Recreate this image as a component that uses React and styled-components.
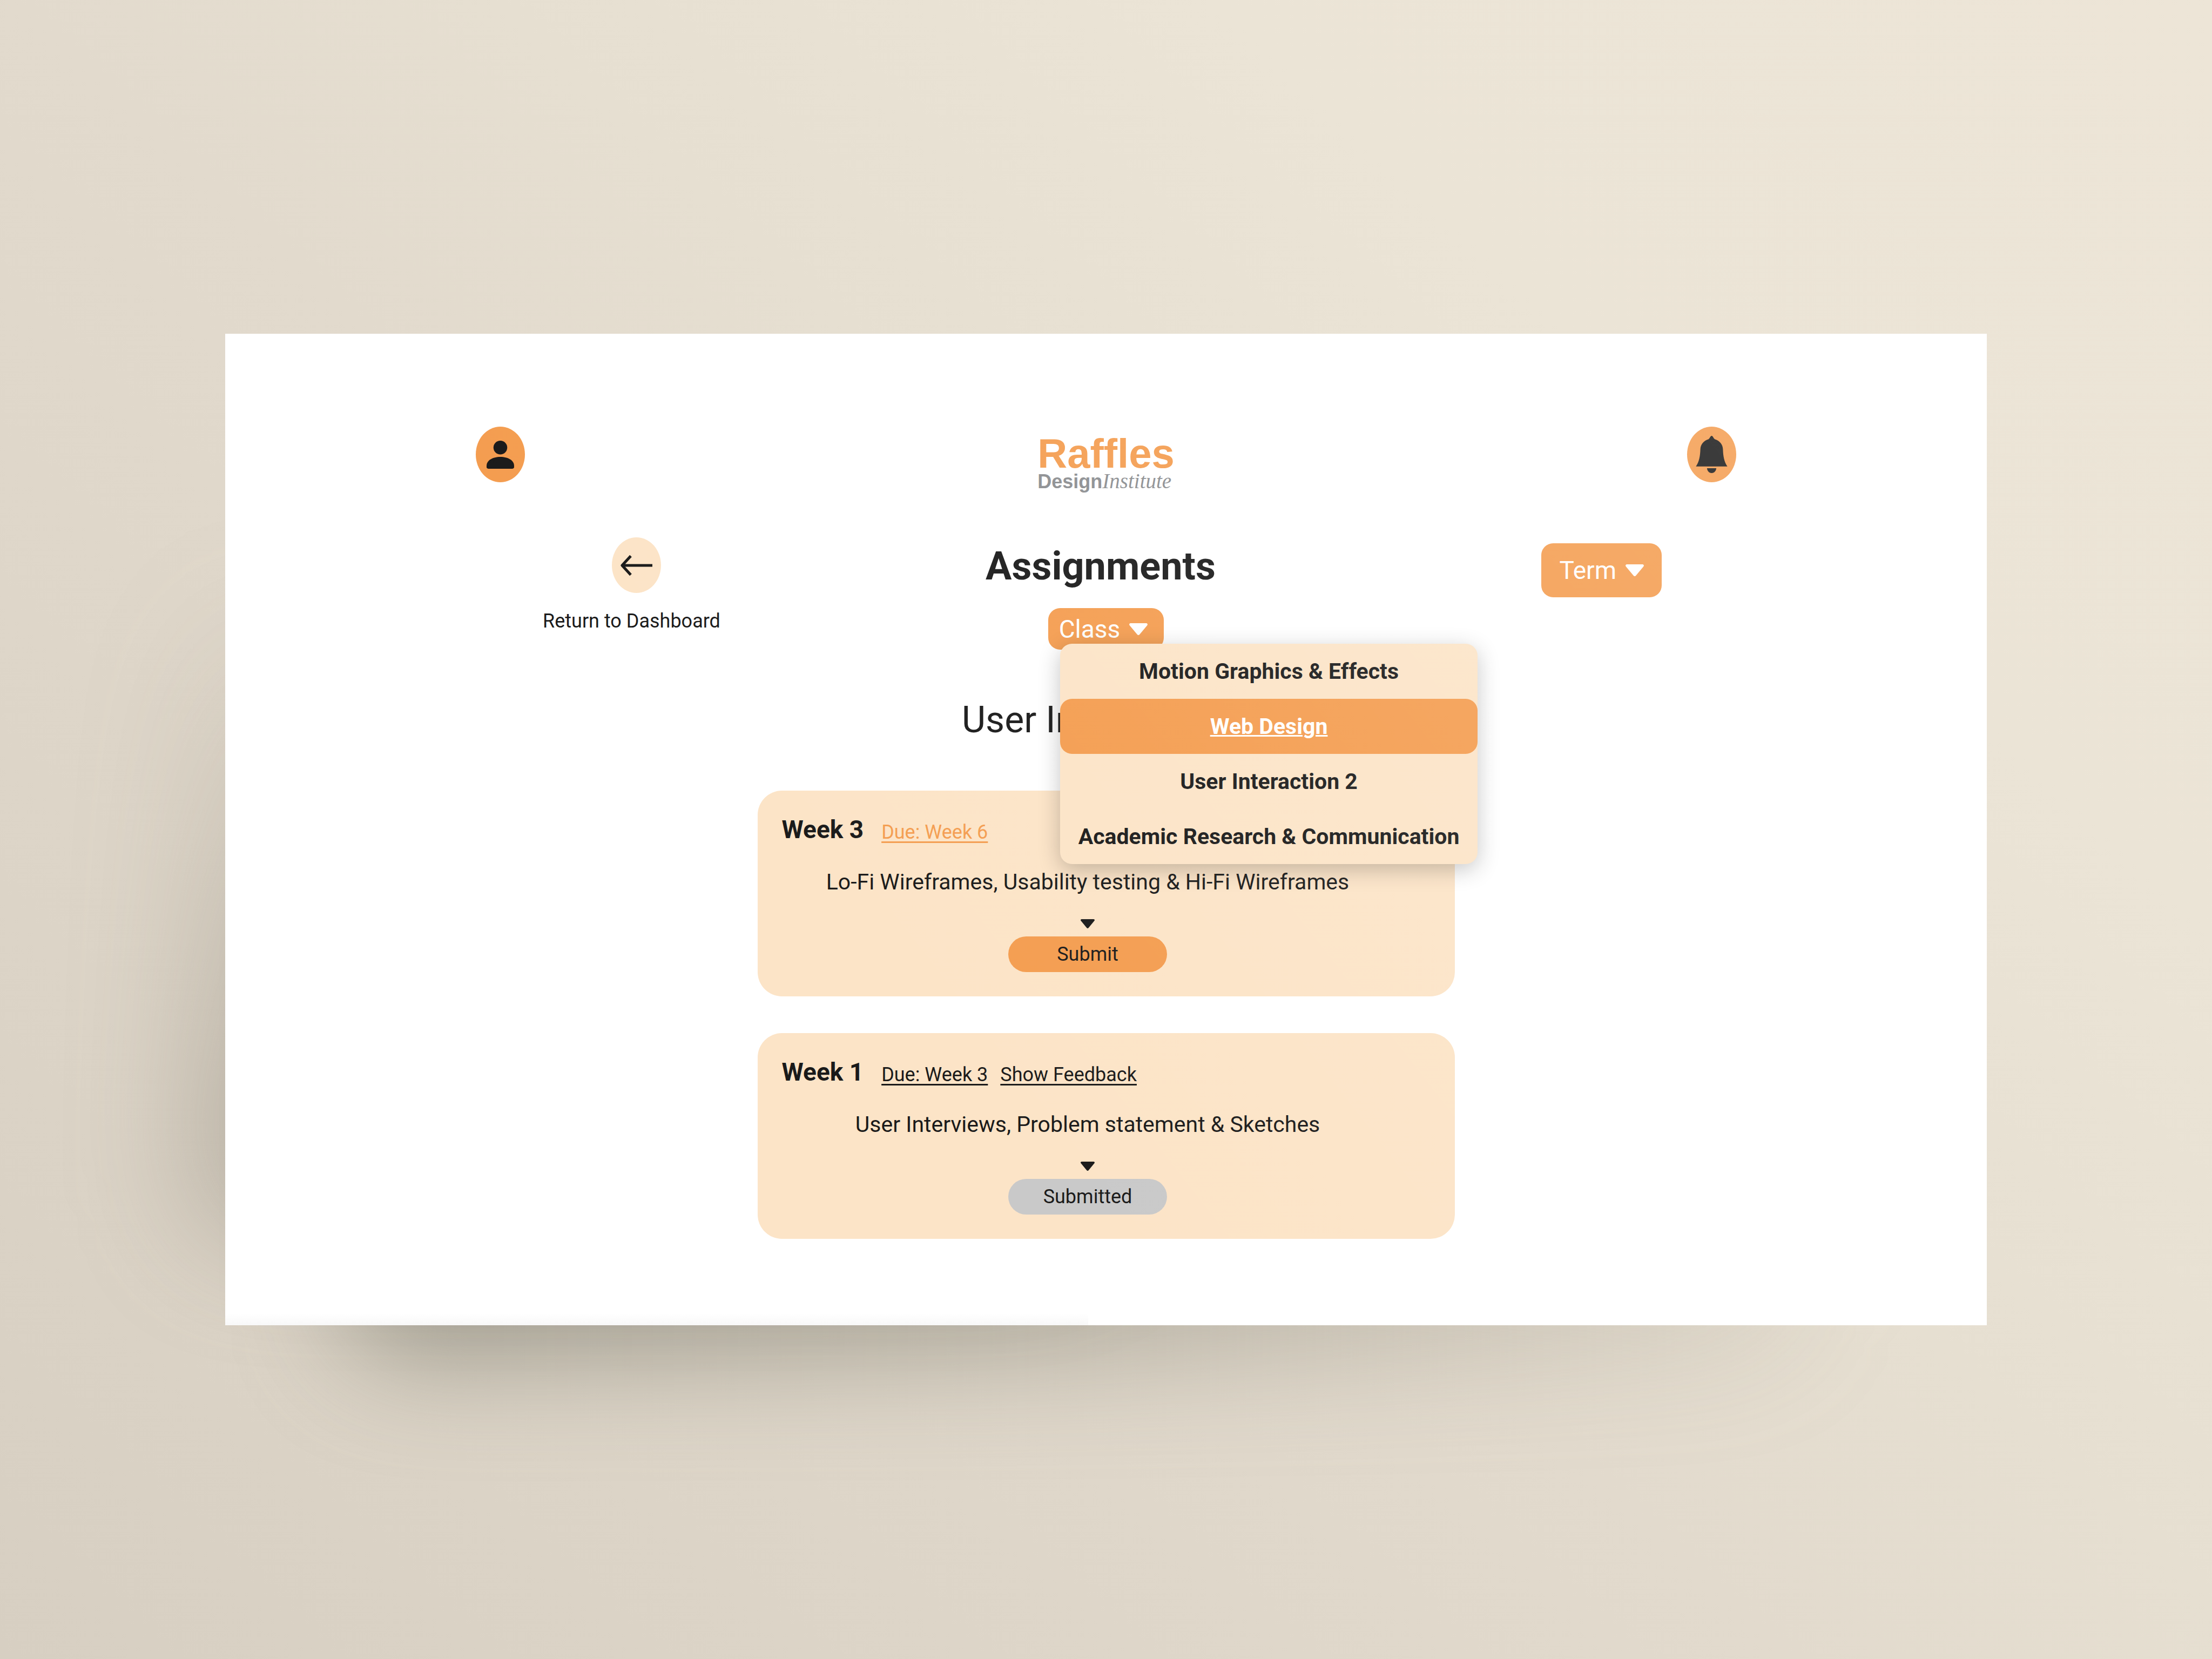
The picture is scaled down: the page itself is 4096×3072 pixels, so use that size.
import React from "react";
import styled, { createGlobalStyle, css } from "styled-components";

const color = {
  orange: "#f49d50",
  cream: "#fce4c7",
  ink: "#1a1a1a",
  grey: "#c9c9c9",
  logoGrey: "#8b8d90",
};

const GlobalStyle = createGlobalStyle`
  *, *::before, *::after { box-sizing: border-box; }
  body {
    margin: 0;
    font-family: Roboto, "Liberation Sans", sans-serif;
    color: ${color.ink};
  }
  h1, h2, h3, p, ul { margin: 0; padding: 0; }
  button { font-family: inherit; border: 0; margin: 0; cursor: pointer; }
  a { color: inherit; }
`;

const Page = styled.div`
  min-height: 100vh;
  display: flex;
  flex-direction: column;
  justify-content: center;
  padding: 0 417px;
  background: linear-gradient(43deg, #d7cfc2 0%, #e2dacd 45%, #e6dfd1 57%, #ebe4d6 75%, #ede5d7 100%);
`;

const Frame = styled.div`
  position: relative;
  isolation: isolate;

  &::before,
  &::after {
    content: "";
    position: absolute;
    z-index: -1;
  }
  &::before {
    inset: 55% 10% -60px 220px;
    border-radius: 120px;
    background: linear-gradient(to right, rgba(108, 108, 94, 0.56), rgba(118, 116, 102, 0.44) 45%, rgba(140, 134, 120, 0.08));
    filter: blur(100px);
  }
  &::after {
    inset: 24% 50% 160px -60px;
    border-radius: 120px;
    background: linear-gradient(to top, rgba(110, 104, 92, 0.38), rgba(140, 134, 120, 0));
    filter: blur(110px);
  }
`;

const Screen = styled.main`
  position: relative;
  display: flex;
  flex-direction: column;
  align-items: center;
  padding: 172px 0 160px;
  background: linear-gradient(to top, #f8f8f8, #fff 22px) left / 49% 100% no-repeat, #fff;

  /* soft light falling from the upper right corner */
  &::after {
    content: "";
    position: absolute;
    inset: 0;
    z-index: 2;
    pointer-events: none;
    background: linear-gradient(52deg, rgba(255, 255, 255, 0) 36%, rgba(255, 255, 255, 0.19) 100%);
  }
`;

const Row = styled.div`
  align-self: stretch;
  display: grid;
  grid-template-columns: 1fr auto 1fr;
  align-items: start;
`;

const TopBar = styled(Row).attrs({ as: "header" })`
  padding: 0 464px;
`;

const oval = css`
  width: 91px;
  height: 103px;
  padding: 0;
  border-radius: 50%;
  display: flex;
  align-items: center;
  justify-content: center;
`;

const OvalButton = styled.button`
  ${oval}
  justify-self: ${(p) => p.$side};
  background: ${color.orange};
  color: ${color.ink};
`;

const Logo = styled.a`
  padding-top: 17px;
  text-decoration: none;
  font-family: "Liberation Sans", Arial, sans-serif;
  font-weight: 700;
`;

const LogoName = styled.span`
  display: block;
  font-size: 76px;
  line-height: 66px;
  color: ${color.orange};
`;

const LogoTag = styled.span`
  display: block;
  font-size: 36px;
  line-height: 36px;
  color: ${color.logoGrey};
`;

const LogoSerif = styled.em`
  font: italic 400 39px/36px "Liberation Serif", "Times New Roman", serif;
`;

const TitleBar = styled(Row)`
  margin-top: 85px;
  padding: 0 588px;
`;

const BackLink = styled.a`
  justify-self: start;
  display: flex;
  flex-direction: column;
  align-items: center;
  gap: 31px;
  font-size: 36px;
  line-height: 43px;
  text-decoration: none;
`;

const BackCircle = styled.span`
  ${oval}
  margin-left: 18px;
  background: ${color.cream};
`;

const TitleColumn = styled.div`
  display: flex;
  flex-direction: column;
  align-items: center;
  gap: 34px;
  padding-top: 11px;
`;

const Title = styled.h1`
  padding-right: 20px;
  font-size: 72px;
  line-height: 86px;
  font-weight: 700;
`;

const TermSlot = styled.div`
  justify-self: end;
  padding: 11px 14px 0 0;
`;

const Dropdown = styled.div`
  position: relative;
`;

const DropButton = styled.button`
  display: flex;
  align-items: center;
  gap: 17px;
  height: ${(p) => (p.$large ? 100 : 77)}px;
  padding: ${(p) => (p.$large ? "0 33px" : "0 30px 0 20px")};
  border-radius: 22px;
  background: ${color.orange};
  color: #fff;
  font-size: 46px;
`;

const Menu = styled.ul`
  position: absolute;
  top: 66px;
  left: 22px;
  z-index: 1;
  list-style: none;
  border-radius: 22px;
  background: ${color.cream};
  box-shadow: 0 10px 40px rgba(0, 0, 0, 0.24);
`;

const MenuLink = styled.a`
  display: block;
  padding: 0 34px;
  border-radius: 22px;
  font-size: 41px;
  line-height: 102px;
  font-weight: 700;
  text-align: center;
  white-space: nowrap;
  text-decoration: ${(p) => (p.$active ? "underline" : "none")};
  text-decoration-thickness: 3px;
  background: ${(p) => (p.$active ? color.orange : "transparent")};
  color: ${(p) => (p.$active ? "#fff" : color.ink)};
`;

const ClassName = styled.h2`
  margin: 90px 0;
  font-size: 68px;
  line-height: 81px;
  font-weight: 400;
`;

const CardList = styled.div`
  display: flex;
  flex-direction: column;
  gap: 68px;
  width: 100%;
  max-width: 1291px;
`;

const Card = styled.article`
  display: flex;
  flex-direction: column;
  align-items: center;
  padding: 45px 113px 45px 45px;
  border-radius: 45px;
  background: ${color.cream};
`;

const CardHead = styled.div`
  align-self: stretch;
  display: flex;
  align-items: flex-end;
  gap: 23px;
`;

const Week = styled.h3`
  margin-right: 10px;
  font-size: 46px;
  line-height: 54px;
  font-weight: 700;
`;

const CardLink = styled.a`
  font-size: 36px;
  line-height: 43px;
  text-decoration-thickness: 3px;
  text-underline-offset: 5px;
  text-decoration-skip-ink: none;
  color: ${(p) => (p.$open ? color.orange : color.ink)};
`;

const Brief = styled.p`
  margin: 46px 0 45px;
  font-size: 41px;
  line-height: 48px;
`;

const Pill = styled.button`
  width: 294px;
  height: 66px;
  margin-top: 15px;
  padding: 0;
  border-radius: 33px;
  font-size: 36px;
  color: ${color.ink};
  background: ${(p) => (p.disabled ? color.grey : color.orange)};
`;

const Svg = styled.svg`
  display: block;
  flex: none;
  fill: currentColor;
`;

const Caret = ({ width, height }) => (
  <Svg width={width} height={height} viewBox="0 0 34 22" preserveAspectRatio="none" aria-hidden="true">
    <path d="M2.5 0H31.5C33.6 0 34.7 2.2 33.3 3.9L19.3 20.8C18 22.4 16 22.4 14.7 20.8L0.7 3.9C-0.7 2.2 0.4 0 2.5 0Z" />
  </Svg>
);

const PersonIcon = () => (
  <Svg width="51" height="52" viewBox="0 0 62 63" aria-hidden="true">
    <circle cx="31" cy="15.5" r="15.5" />
    <path d="M0 57C0 44 14 36.5 31 36.5S62 44 62 57V59Q62 63 58 63H4Q0 63 0 59Z" />
  </Svg>
);

const BellIcon = () => (
  <Svg width="59" height="69" viewBox="0 0 72 84" aria-hidden="true">
    <path d="M36 0C38.5 0 40.5 6 43 7.5C54 11 61 19 61.5 30C62 45 64 58 71.5 69H.5C8 58 10 45 10.5 30C11 19 18 11 29 7.5C31.5 6 33.5 0 36 0Z" />
    <path d="M25.5 73H46.5C46 79 42 84 36 84S26 79 25.5 73Z" />
  </Svg>
);

const ArrowIcon = () => (
  <Svg width="59" height="40" viewBox="0 0 59 40" aria-hidden="true">
    <path d="M19 2.5L3 20L19 37.5M3 20H59" fill="none" stroke="currentColor" strokeWidth="5" strokeLinejoin="round" />
  </Svg>
);

const classes = [
  "Motion Graphics & Effects",
  "Web Design",
  "User Interaction 2",
  "Academic Research & Communication",
];

const assignments = [
  {
    week: "Week 3",
    due: "Due: Week 6",
    brief: "Lo-Fi Wireframes, Usability testing & Hi-Fi Wireframes",
    done: false,
  },
  {
    week: "Week 1",
    due: "Due: Week 3",
    brief: "User Interviews, Problem statement & Sketches",
    done: true,
  },
];

function Assignment({ week, due, brief, done }) {
  return (
    <Card>
      <CardHead>
        <Week>{week}</Week>
        <CardLink href="#due" $open={!done}>{due}</CardLink>
        {done && <CardLink href="#feedback">Show Feedback</CardLink>}
      </CardHead>
      <Brief>{brief}</Brief>
      <Caret width={26} height={17} />
      <Pill type="button" disabled={done}>{done ? "Submitted" : "Submit"}</Pill>
    </Card>
  );
}

export default function App() {
  return (
    <Page>
      <GlobalStyle />
      <Frame>
        <Screen>
          <TopBar>
            <OvalButton type="button" aria-label="Profile" $side="start">
              <PersonIcon />
            </OvalButton>
            <Logo href="#home">
              <LogoName>Raffles</LogoName>
              <LogoTag>Design<LogoSerif>Institute</LogoSerif></LogoTag>
            </Logo>
            <OvalButton type="button" aria-label="Notifications" $side="end">
              <BellIcon />
            </OvalButton>
          </TopBar>

          <TitleBar>
            <BackLink href="#dashboard">
              <BackCircle><ArrowIcon /></BackCircle>
              Return to Dashboard
            </BackLink>
            <TitleColumn>
              <Title>Assignments</Title>
              <Dropdown>
                <DropButton type="button" aria-haspopup="true" aria-expanded="true">
                  Class
                  <Caret width={34} height={22} />
                </DropButton>
                <Menu>
                  {classes.map((name) => (
                    <li key={name}>
                      <MenuLink href="#class" $active={name === "Web Design"}>{name}</MenuLink>
                    </li>
                  ))}
                </Menu>
              </Dropdown>
            </TitleColumn>
            <TermSlot>
              <DropButton type="button" aria-haspopup="true" $large>
                Term
                <Caret width={34} height={22} />
              </DropButton>
            </TermSlot>
          </TitleBar>

          <ClassName>User Interaction 2</ClassName>

          <CardList>
            {assignments.map((item) => (
              <Assignment key={item.week} {...item} />
            ))}
          </CardList>
        </Screen>
      </Frame>
    </Page>
  );
}
